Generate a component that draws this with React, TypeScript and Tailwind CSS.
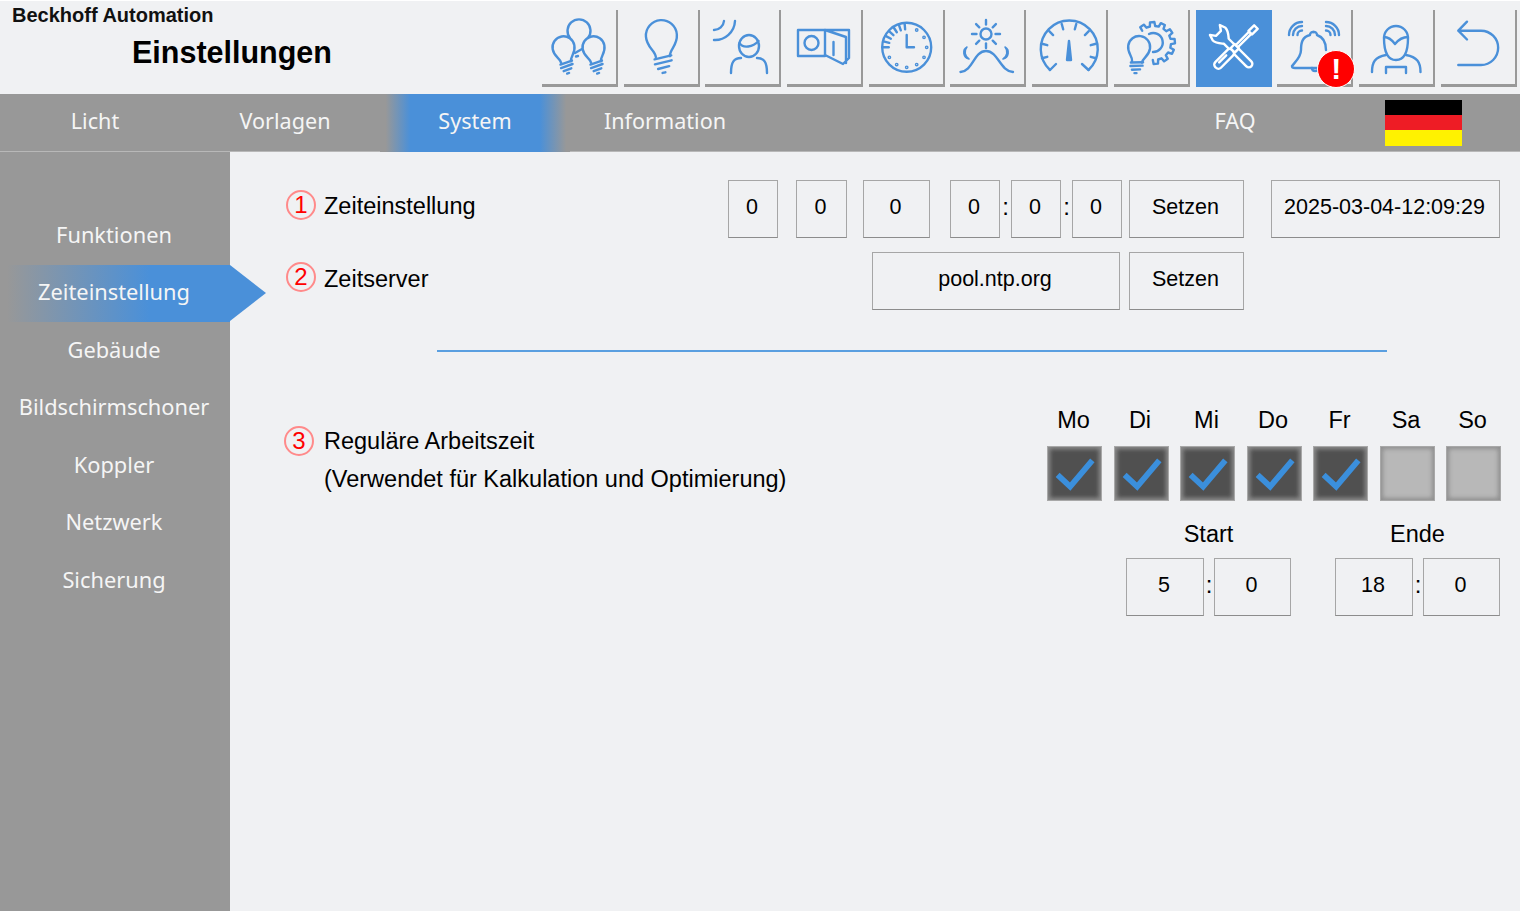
import type { ReactNode } from "react";

const polar = (cx: number, cy: number, r: number, deg: number) => {
  const a = (deg * Math.PI) / 180;
  return [+(cx + r * Math.cos(a)).toFixed(2), +(cy + r * Math.sin(a)).toFixed(2)];
};

const Ticks = ({ cx, cy, r1, r2, from, to, n, w = 2.4 }: { cx: number; cy: number; r1: number; r2: number; from: number; to: number; n: number; w?: number }) => (
  <>
    {Array.from({ length: n }, (_, i) => {
      const d = n === 1 ? from : from + ((to - from) * i) / (n - 1);
      const [x1, y1] = polar(cx, cy, r1, d);
      const [x2, y2] = polar(cx, cy, r2, d);
      return <line key={i} x1={x1} y1={y1} x2={x2} y2={y2} strokeWidth={w} />;
    })}
  </>
);

const Bulb = ({ x, y, r = 11, rot = 0 }: { x: number; y: number; r?: number; rot?: number }) => {
  const k = r / 11;
  return (
    <g transform={`translate(${x} ${y}) rotate(${rot}) scale(${k})`} strokeWidth={2.4 / k}>
      <path d="M-5 14C-5 9-11 7-11 -1A11 11 0 1 1 11 -1C11 7 5 9 5 14" />
      <path d="M-6 15.5L6 13.5M-6 19L6 17M-4 22.5L4 21M-1 25.5L1 25.2" />
    </g>
  );
};

const gearPath = () => {
  const pts: string[] = [];
  for (let i = 0; i < 8; i++) {
    const d = -125 + i * 30;
    const a = polar(40, 33, 17, d - 9);
    const b = polar(40, 33, 21, d - 6);
    const c = polar(40, 33, 21, d + 6);
    const e = polar(40, 33, 17, d + 9);
    pts.push(`${i === 0 ? "M" : "L"}${a[0]} ${a[1]}L${b[0]} ${b[1]}L${c[0]} ${c[1]}L${e[0]} ${e[1]}`);
  }
  return pts.join("");
};

const icons: ReactNode[] = [
  <>
    <path d="M28 28A11.5 11.5 0 1 1 46 28" />
    <path d="M33 43L40 39M34 46.500L36 46" />
    <Bulb x={21.7} y={38.3} r={11} rot={-10} />
    <Bulb x={51.7} y={38.3} r={11} rot={-10} />
  </>,
  <Bulb x={37.5} y={27} r={15.5} rot={-4} />,
  <>
    <path d="M9 30A20 20 0 0 0 30 11M9 20A10 10 0 0 0 19 11" />
    <ellipse cx={44} cy={36} rx={10} ry={11} />
    <path d="M34.500 33C38 39 48 37 53.500 31" />
    <path d="M26 63C26 52 29 48 36 48M52 48C59 48 62 52 62 63" />
  </>,
  <>
    <rect x={11} y={20} width={27} height={26} />
    <circle cx={24.5} cy={33} r={7} />
    <path d="M38 20H62V48L56 54L38 45M38 20L59 27V53M46.5 32V45" />
  </>,
  <>
    <circle cx={37.7} cy={37.3} r={24.5} />
    <path d="M37.7 25V37.3H45" />
    <Ticks cx={37.7} cy={37.3} r1={18} r2={24} from={-180} to={-95} n={7} />
    {[-60, -30, 0, 30, 60, 90, 120, 150].map((d) => {
      const [x, y] = polar(37.7, 37.3, 20, d);
      return <circle key={d} cx={x} cy={y} r={0.7} />;
    })}
  </>,
  <>
    <circle cx={36} cy={24} r={5.5} />
    <Ticks cx={36} cy={24} r1={9.5} r2={14} from={0} to={315} n={8} />
    <path d="M10.5 62C23 61 24 41 36 41C48 41 50 61 63 62" />
    <path d="M17 37A6.5 6.500 0 0 0 19 49A8 8 0 0 1 17 37ZM55 37A6.500 6.500 0 0 1 53 49A8 8 0 0 0 55 37Z" fill="#4a90d9" strokeWidth={1.5} />
  </>,
  <>
    <path d="M18 60A28.5 28.5 0 1 1 56.5 60" />
    <path d="M18 60L24 54M56.5 60L50 54" />
    <Ticks cx={37} cy={41} r1={22.5} r2={28} from={-195} to={15} n={8} />
    <path d="M37 31L35 50H39Z" fill="#4a90d9" />
  </>,
  <>
    <Bulb x={25} y={38} r={11} rot={8} />
    <path d={gearPath()} />
    <path d="M35 24A9.500 9.500 0 1 1 39 42" />
  </>,
  <>
    <g transform="translate(38 39) rotate(45)" fill="#4a90d9">
      <path d="M-11 -3.500C-14 -6 -17 -9 -21 -9L-27 -7L-22 -3.500V3.500L-27 7L-21 9C-17 9 -14 6 -11 3.500H21A3.500 3.500 0 0 0 21 -3.500H-11" />
    </g>
    <g transform="translate(38 39) rotate(-45)" fill="#4a90d9">
      <rect x={-26} y={-4} width={24} height={8} rx={3.5} />
      <path d="M-20 -1H-10" />
      <rect x={-2} y={-3} width={6} height={6} />
      <path d="M4 -1.500H23V1.500H4Z" />
      <path d="M23 -2.500H31V2.500H23Z" />
    </g>
  </>,
  <>
    <path d="M36.5 22A3 3 0 0 0 33 25C25 27 24 33 24 40C24 47 19 51 15 56C15 57 16 58 18 58H55" />
    <path d="M36.5 22A3 3 0 0 1 40 25C46 27 49 32 49 40" />
    <path d="M35 58C35 62 41 62 42 58" />
    <path d="M12 25A13 13 0 0 1 25 12M16 25A9 9 0 0 1 25 16M20.500 25A4.500 4.500 0 0 1 25 20.500" />
    <path d="M62 25A13 13 0 0 0 49 12M58 25A9 9 0 0 0 49 16M53.500 25A4.500 4.500 0 0 0 49 20.500" />
  </>,
  <>
    <path d="M25 28C25 44 30 50 37 50C44 50 49 44 49 28A12 12 0 0 0 25 28Z" />
    <path d="M25 27C30 27 33 30 36 34C40 29 45 27 49 27" />
    <path d="M13 62C13 52 16 47 27 45M61.500 62C61.500 52 58 47 47 45" />
    <path d="M27 63V57H47V63" />
  </>,
  <path d="M26 11.700L17.300 20.700L26 29.500M17.300 20.700H40A17 17 0 0 1 40 55H17.300" />,
];

const Btn = ({ children, w, className = "" }: { children: ReactNode; w: string; className?: string }) => (
  <div className={`flex h-[58px] items-center justify-center border border-[#a6a6a6] border-b-[#8c8c8c] pb-[3px] pr-[2px] text-[21.5px] leading-none text-black ${w} ${className}`}>
    {children}
  </div>
);

const Colon = ({ w }: { w: string }) => <div className={`flex h-[58px] items-center justify-center pb-[4px] text-[24px] leading-none text-black ${w}`}>:</div>;

const Num = ({ n }: { n: number }) => (
  <div className="flex h-[30px] w-[30px] shrink-0 items-center justify-center rounded-full border-2 border-[#ff8a8a] text-[24px] leading-none text-[#ff0000]">
    {n}
  </div>
);

const navItems = ["Licht", "Vorlagen", "System", "Information"];
const sideItems = ["Funktionen", "Zeiteinstellung", "Gebäude", "Bildschirmschoner", "Koppler", "Netzwerk", "Sicherung"];
const days = ["Mo", "Di", "Mi", "Do", "Fr", "Sa", "So"];

export default function App() {
  return (
    <div className="h-[913px] w-[1521px] overflow-hidden bg-white pt-px font-['Liberation_Sans',sans-serif]">
      <div className="flex h-[910px] w-[1520px] flex-col bg-[#f0f1f3]">
        {/* Header */}
        <header className="flex h-[93px] shrink-0">
          <div className="w-[542px] shrink-0">
            <div className="pl-3 pt-[3px] text-[20px] font-bold leading-[23px] text-[#111]">Beckhoff Automation</div>
            <h1 className="pl-[132px] pt-[6px] text-[30.500px] font-bold leading-[38px] text-black">Einstellungen</h1>
          </div>
          <div className="flex gap-[5.7px] pt-[9px]">
            {icons.map((icon, i) => (
              <div
                key={i}
                className={`relative h-[77px] w-[76px] ${i === 8 ? "bg-[#4a90d9]" : "border-b-[3px] border-r-2 border-[#999]"}`}
              >
                <svg
                  viewBox="0 0 76 77"
                  className="absolute left-0 top-0 h-[77px] w-[76px]"
                  fill="none"
                  stroke={i === 8 ? "#ffffff" : "#4a90d9"}
                  strokeWidth={2.4}
                  strokeLinecap="round"
                  strokeLinejoin="round"
                >
                  {icon}
                </svg>
                {i === 9 && (
                  <div className="absolute left-[40px] top-[40px] flex h-[38px] w-[38px] items-center justify-center rounded-full border border-white bg-[#ff0000] text-[30px] font-bold leading-none text-white">
                    !
                  </div>
                )}
              </div>
            ))}
          </div>
        </header>

        {/* Top nav */}
        <nav className="flex h-[58px] shrink-0 border-b border-[#b8b8b8] bg-[#989898] font-['Noto_Sans',sans-serif] text-[21.6px] text-[#f5f5f5]">
          {navItems.map((t) => (
            <div
              key={t}
              className={`flex h-[58px] w-[190px] items-center justify-center pb-[3px] ${
                t === "System" ? "bg-[linear-gradient(90deg,#989898_3%,#4a90d9_16%,#4a90d9_84%,#989898_98%)]" : ""
              }`}
            >
              {t}
            </div>
          ))}
          <div className="ml-[380px] flex h-[58px] w-[190px] items-center justify-center pb-[3px]">FAQ</div>
          <div className="ml-[55px] mt-[6px] flex h-[46px] w-[77px] flex-col">
            <div className="h-[15px] bg-black" />
            <div className="h-[15px] bg-[#ee1c25]" />
            <div className="h-[16px] bg-[#fff200]" />
          </div>
        </nav>

        <div className="flex min-h-0 flex-1">
          {/* Sidebar */}
          <aside className="w-[230px] shrink-0 bg-[#989898] pt-[55px] font-['Noto_Sans',sans-serif] text-[21.8px] text-[#f5f5f5]">
            {sideItems.map((t) => (
              <div
                key={t}
                className={`relative flex h-[57.5px] items-center justify-center pb-[1px] pr-[2px] ${
                  t === "Zeiteinstellung" ? "bg-[linear-gradient(90deg,#989898_3%,#4a90d9_65%)]" : ""
                }`}
              >
                {t}
                {t === "Zeiteinstellung" && (
                  <div className="absolute left-full top-0 h-0 w-0 border-y-[28.75px] border-l-[36px] border-y-transparent border-l-[#4a90d9]" />
                )}
              </div>
            ))}
          </aside>

          {/* Content */}
          <main className="min-w-0 flex-1 pr-[19px] pt-[28px] text-[23.5px] text-black">
            <div className="flex">
              <div className="flex w-[498px] items-start pl-[56px] pt-[10px]">
                <Num n={1} />
                <span className="-mt-[2px] ml-2 leading-[36px]">Zeiteinstellung</span>
              </div>
              <Btn w="w-[50px]">0</Btn>
              <Btn w="w-[51px] ml-[18px]">0</Btn>
              <Btn w="w-[67px] ml-[16px]">0</Btn>
              <Btn w="w-[50px] ml-[20px]">0</Btn>
              <Colon w="w-[11px]" />
              <Btn w="w-[50px]">0</Btn>
              <Colon w="w-[11px]" />
              <Btn w="w-[50px]">0</Btn>
              <Btn w="w-[115px] ml-[7px]">Setzen</Btn>
              <Btn w="w-[229px] ml-[27px]">2025-03-04-12:09:29</Btn>
            </div>

            <div className="mt-[14px] flex">
              <div className="flex w-[642px] items-start pl-[56px] pt-[10px]">
                <Num n={2} />
                <span className="-mt-px ml-2 leading-[36px]">Zeitserver</span>
              </div>
              <Btn w="w-[248px]">pool.ntp.org</Btn>
              <Btn w="w-[115px] ml-[9px]">Setzen</Btn>
            </div>

            <div className="ml-[207px] mt-[40px] h-[2px] w-[950px] bg-[#5a9fe0]" />

            <div className="mt-[53px] flex justify-between">
              <div className="flex items-start pl-[54px] pt-[17px]">
                <div className="mt-[4px]">
                  <Num n={3} />
                </div>
                <div className="ml-[10px] leading-[38px]">
                  <div>Reguläre Arbeitszeit</div>
                  <div>(Verwendet für Kalkulation und Optimierung)</div>
                </div>
              </div>
              <div className="w-[454px]">
                <div className="grid grid-cols-7 gap-x-[11.500px]">
                  {days.map((d) => (
                    <div key={d} className="pr-[2px] text-center leading-[30px]">
                      {d}
                    </div>
                  ))}
                </div>
                <div className="mt-[11px] grid grid-cols-7 gap-x-[11.500px]">
                  {days.map((d, i) => (
                    <div
                      key={d}
                      className={`flex h-[55px] items-center justify-center border border-[#a8a8a8] shadow-[inset_0_0_4px_2px_#8f8f8f] ${
                        i < 5 ? "bg-[#505050]" : "bg-[#b8b8b8]"
                      }`}
                    >
                      {i < 5 && (
                        <svg viewBox="0 0 55 55" className="h-[53px] w-[53px]" fill="none" stroke="#3b8fdc" strokeWidth={6}>
                          <path d="M10 29L23 41L46 14" />
                        </svg>
                      )}
                    </div>
                  ))}
                </div>
                <div className="ml-[79px] mt-[18px] flex">
                  <div className="w-[165px] text-center leading-[30px]">Start</div>
                  <div className="ml-[44px] w-[165px] text-center leading-[30px]">Ende</div>
                </div>
                <div className="ml-[79px] mt-[9px] flex">
                  <Btn w="w-[78px]">5</Btn>
                  <Colon w="w-[10px]" />
                  <Btn w="w-[77px]">0</Btn>
                  <Btn w="w-[78px] ml-[44px]">18</Btn>
                  <Colon w="w-[10px]" />
                  <Btn w="w-[77px]">0</Btn>
                </div>
              </div>
            </div>
          </main>
        </div>
      </div>
    </div>
  );
}
